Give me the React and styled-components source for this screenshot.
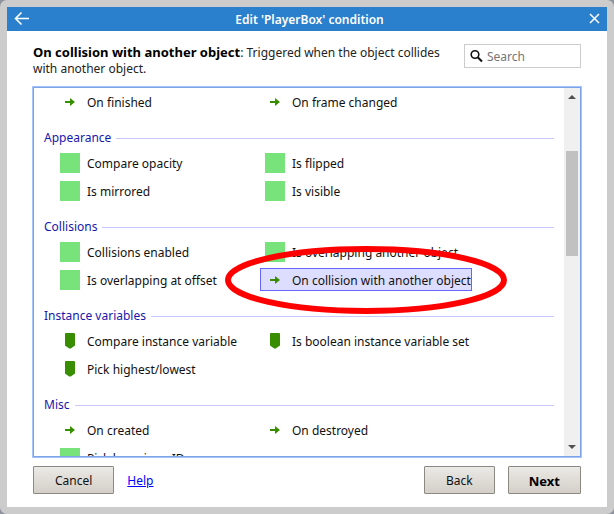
import React from 'react';
import styled, { createGlobalStyle } from 'styled-components';

const GlobalStyle = createGlobalStyle`
  * { box-sizing: border-box; }
  body {
    margin: 0;
    background: #8f949c;
    color: #111;
    font: 12px/16px "Noto Sans", sans-serif;
  }
  button, input { font: inherit; color: inherit; }
`;

const Dialog = styled.main`
  display: flex;
  flex-direction: column;
  height: 100vh;
  padding: 7px;
  background: #ccc;
  border-radius: 7px;
`;

const TitleBar = styled.header`
  display: flex;
  align-items: center;
  justify-content: space-between;
  height: 24px;
  flex: none;
  padding: 0 6px;
  background: #2a80cd;
  color: #fff;
`;

const Title = styled.h1`
  margin: 0;
  padding-top: 2px;
  font-size: 12px;
  line-height: 16px;
  font-weight: 600;
`;

const IconButton = styled.button`
  display: flex;
  padding: 0;
  border: 0;
  background: none;
  color: #fff;
`;

const Body = styled.section`
  display: flex;
  flex-direction: column;
  flex: 1;
  min-height: 0;
  padding: 13px 26px;
  background: #fff;
`;

const Intro = styled.div`
  display: flex;
  gap: 12px;
  height: 42px;
  flex: none;
`;

const Description = styled.p`
  flex: 1;
  margin: 0;
  color: #222;
  strong { color: #000; font-size: 13px; }
`;

const SearchBox = styled.label`
  display: flex;
  align-items: center;
  gap: 4px;
  width: 117px;
  height: 24px;
  padding: 0 5px;
  border: 1px solid #ccc;
  input {
    flex: 1;
    min-width: 0;
    padding: 2px 0 0;
    border: 0;
    outline: 0;
    background: none;
  }
  input::placeholder { color: #757575; opacity: 1; }
`;

const ListFrame = styled.div`
  display: flex;
  flex: 1;
  min-height: 0;
  margin: 0 -1px;
  border: 1px solid #a4c5fa;
  box-shadow: inset 0 0 0 1px #7da2e6;
  padding: 1px;
`;

const ListContent = styled.div`
  flex: 1;
  min-width: 0;
  overflow: hidden;
  padding: 2px 10px 0;
`;

const Group = styled.section`
  padding-bottom: 16px;
`;

const Heading = styled.h2`
  display: flex;
  align-items: center;
  gap: 5px;
  height: 18px;
  margin: 0 0 4px;
  font-size: 12px;
  line-height: 18px;
  font-weight: 400;
  color: #1717ab;
  &::after {
    content: "";
    flex: 1;
    height: 1px;
    background: #c8c8ff;
  }
`;

const Items = styled.div`
  display: grid;
  grid-template-columns: 205px 1fr;
  justify-items: start;
  row-gap: 5px;
  padding-left: 11px;
`;

const Item = styled.button`
  position: relative;
  display: flex;
  align-items: center;
  gap: 7px;
  height: 23px;
  padding: 1px 0 0 4px;
  border: 1px solid ${p => (p.$selected ? '#6666ff' : 'transparent')};
  background: ${p => (p.$selected ? '#ddddff' : 'transparent')};
  color: #111;
  white-space: nowrap;
  text-align: left;
`;

const ItemLabel = styled.span`
  padding-top: 2px;
`;

const ItemIcon = styled.svg`
  flex: none;
  width: 20px;
  height: 20px;
`;

const Highlight = styled.svg`
  position: absolute;
  left: -36px;
  top: -23px;
  width: 282px;
  height: 68px;
  z-index: 1;
  pointer-events: none;
`;

const ScrollTrack = styled.div`
  display: flex;
  flex-direction: column;
  align-items: center;
  width: 16px;
  flex: none;
  background: #f0f0f0;
`;

const ScrollArrow = styled.svg`
  width: 16px;
  height: 18px;
  flex: none;
`;

const ScrollSpace = styled.div`
  flex: ${p => p.$grow} 1 0;
`;

const ScrollThumb = styled.div`
  flex: 105 1 0;
  width: 12px;
  background: #c1c1c1;
`;

const Footer = styled.footer`
  display: flex;
  align-items: center;
  gap: 13px;
  flex: none;
  margin-top: 8px;
`;

const Button = styled.button`
  height: 28px;
  padding: 1px ${p => (p.$primary ? '20px' : '21px')} 0;
  border: 1px solid #8c8983;
  border-radius: 1px;
  background: linear-gradient(#ebe9e6, #d4cfc8);
  color: ${p => (p.$primary ? '#000' : '#111')};
  font-size: ${p => (p.$primary ? '13px' : '12px')};
  font-weight: ${p => (p.$primary ? 700 : 400)};
`;

const HelpLink = styled.a`
  color: #0000ff;
  margin-right: auto;
  padding-top: 1px;
`;

const icons = {
  arrow: <path d="M5 9h5V6l5 4-5 4v-3H5z" fill="#388e00" />,
  block: <path d="M0 0h20v20H0z" fill="#79e37b" />,
  tag: <path d="M6 2h8q1 0 1 1v11.5L10.8 17.6H9.2L5 14.5V3q0-1 1-1z" fill="#388e00" />,
};

const groups = [
  { items: [['arrow', 'On finished'], ['arrow', 'On frame changed']] },
  {
    title: 'Appearance',
    items: [
      ['block', 'Compare opacity'], ['block', 'Is flipped'],
      ['block', 'Is mirrored'], ['block', 'Is visible'],
    ],
  },
  {
    title: 'Collisions',
    items: [
      ['block', 'Collisions enabled'], ['block', 'Is overlapping another object'],
      ['block', 'Is overlapping at offset'], ['arrow', 'On collision with another object', true],
    ],
  },
  {
    title: 'Instance variables',
    items: [
      ['tag', 'Compare instance variable'], ['tag', 'Is boolean instance variable set'],
      ['tag', 'Pick highest/lowest'],
    ],
  },
  {
    title: 'Misc',
    items: [['arrow', 'On created'], ['arrow', 'On destroyed'], ['block', 'Pick by unique ID']],
  },
];

export default function App() {
  return (
    <>
      <GlobalStyle />
      <Dialog>
        <TitleBar>
          <IconButton aria-label="Go back">
            <svg width="18" height="18" viewBox="0 0 18 18" fill="none" stroke="currentColor" strokeWidth="1.6">
              <path d="M8.5 2.5 2.5 8.5l6 6M2.5 8.5H16" />
            </svg>
          </IconButton>
          <Title>Edit 'PlayerBox' condition</Title>
          <IconButton aria-label="Close">
            <svg width="13" height="18" viewBox="0 0 13 18" fill="none" stroke="currentColor" strokeWidth="1.5">
              <path d="m2 4 9 9m0-9-9 9" />
            </svg>
          </IconButton>
        </TitleBar>
        <Body>
          <Intro>
            <Description>
              <strong>On collision with another object</strong>: Triggered when the object collides with another object.
            </Description>
            <SearchBox>
              <svg width="13" height="14" viewBox="0 0 13 14" fill="none" stroke="#111">
                <circle cx="5" cy="5.5" r="3.8" strokeWidth="1.6" />
                <path d="m7.7 8.2 4.3 4.3" strokeWidth="2" />
              </svg>
              <input type="text" placeholder="Search" aria-label="Search" />
            </SearchBox>
          </Intro>
          <ListFrame>
            <ListContent>
              {groups.map((group, i) => (
                <Group key={i}>
                  {group.title && <Heading>{group.title}</Heading>}
                  <Items>
                    {group.items.map(([icon, label, selected]) => (
                      <Item key={label} $selected={selected}>
                        <ItemIcon viewBox="0 0 20 20">{icons[icon]}</ItemIcon>
                        <ItemLabel>{label}</ItemLabel>
                        {selected && (
                          <Highlight viewBox="0 0 282 68" aria-hidden="true">
                            <ellipse cx="141" cy="34" rx="138" ry="31" fill="none" stroke="#f00" strokeWidth="6" />
                          </Highlight>
                        )}
                      </Item>
                    ))}
                  </Items>
                </Group>
              ))}
            </ListContent>
            <ScrollTrack aria-hidden="true">
              <ScrollArrow viewBox="0 0 16 18"><path d="m4 11 4-4 4 4z" fill="#505050" /></ScrollArrow>
              <ScrollSpace $grow={45} />
              <ScrollThumb />
              <ScrollSpace $grow={182} />
              <ScrollArrow viewBox="0 0 16 18"><path d="m4 7 4 4 4-4z" fill="#505050" /></ScrollArrow>
            </ScrollTrack>
          </ListFrame>
          <Footer>
            <Button>Cancel</Button>
            <HelpLink href="#help">Help</HelpLink>
            <Button>Back</Button>
            <Button $primary>Next</Button>
          </Footer>
        </Body>
      </Dialog>
    </>
  );
}
